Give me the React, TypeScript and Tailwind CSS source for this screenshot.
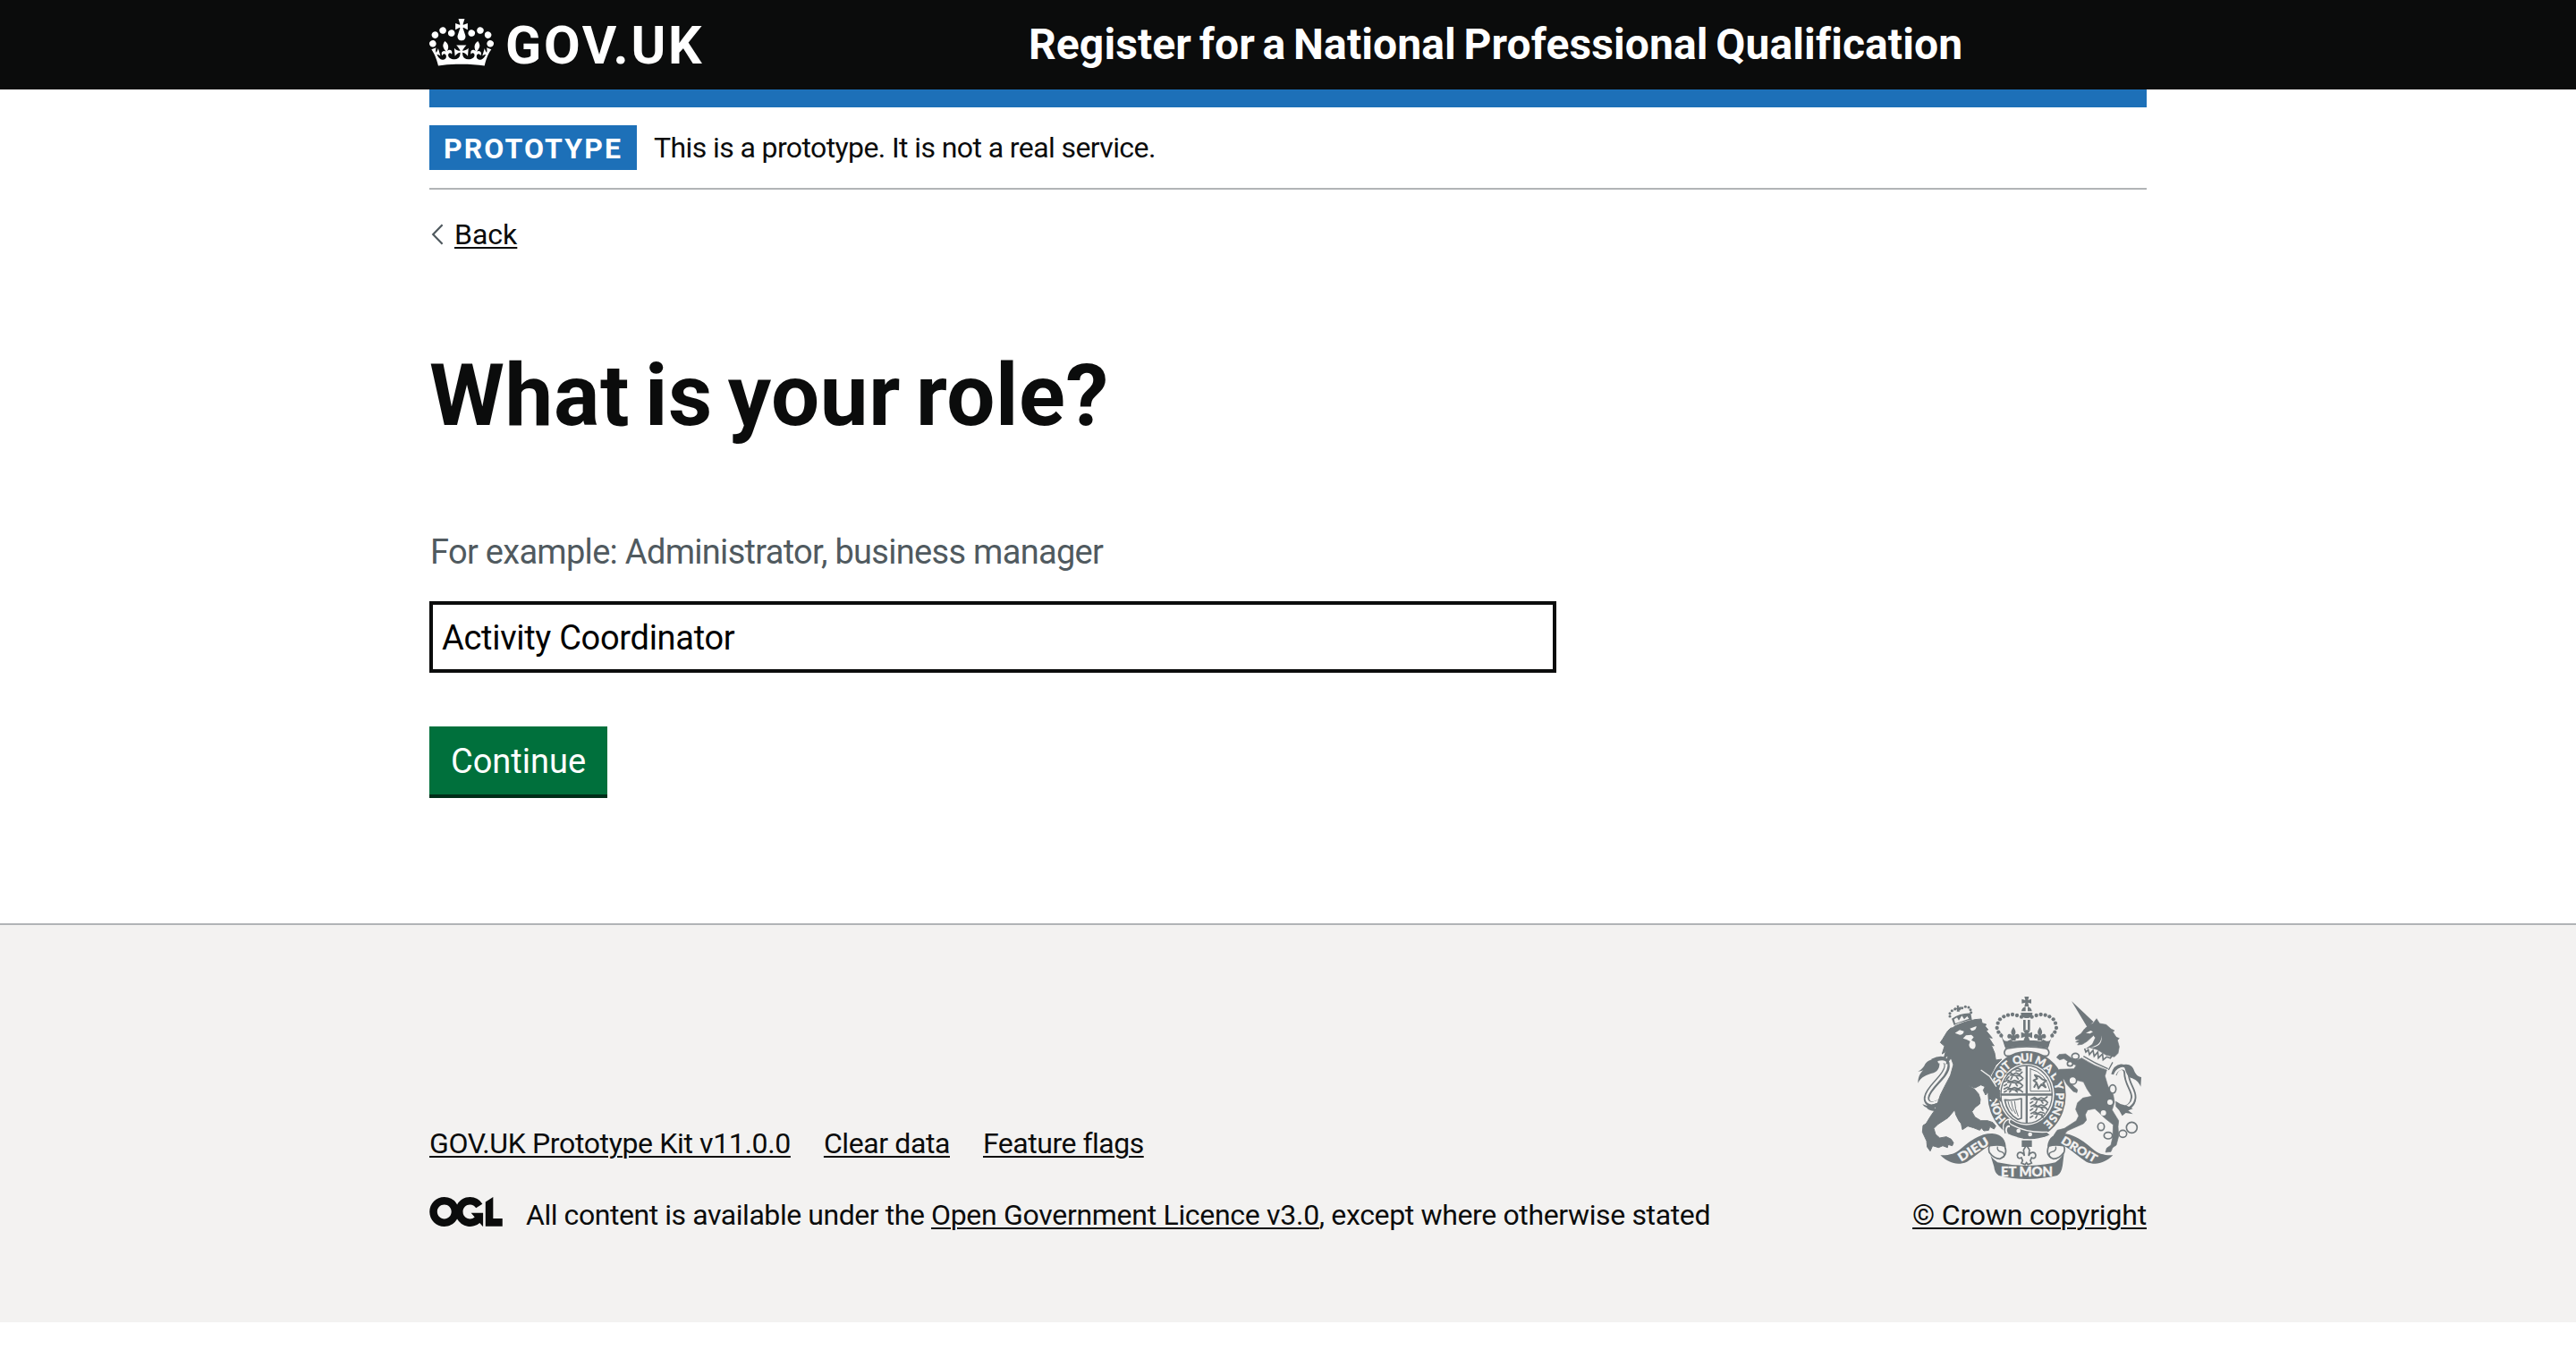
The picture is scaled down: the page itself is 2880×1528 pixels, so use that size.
import { useState } from "react";

const ink = "#6f777b";
const paper = "#f3f2f1";

function CrownLogo() {
  return (
    <svg viewBox="0 0 132 97" className="h-[53px] w-[72px] shrink-0" fill="currentColor" aria-hidden="true">
      <path
        fillRule="evenodd"
        d="M25 30.2c3.5 1.5 7.7-.2 9.1-3.7 1.5-3.6-.2-7.8-3.9-9.2-3.6-1.4-7.6.3-9.1 3.9-1.4 3.5.3 7.5 3.9 9zM9 39.5c3.6 1.5 7.8-.2 9.2-3.7 1.5-3.6-.2-7.8-3.9-9.1-3.6-1.5-7.6.2-9.1 3.8-1.4 3.5.3 7.5 3.8 9zM4.4 57.2c3.5 1.5 7.7-.2 9.1-3.8 1.5-3.6-.2-7.7-3.9-9.1-3.5-1.5-7.6.3-9.1 3.8-1.4 3.5.3 7.6 3.9 9.1zm38.3-21.4c3.5 1.5 7.7-.2 9.1-3.8 1.5-3.6-.2-7.7-3.9-9.1-3.6-1.5-7.6.3-9.1 3.8-1.3 3.6.4 7.7 3.9 9.1zm64.4-5.6c-3.6 1.5-7.8-.2-9.1-3.7-1.5-3.6.2-7.8 3.8-9.2 3.6-1.4 7.7.3 9.2 3.9 1.3 3.5-.4 7.5-3.9 9zm15.9 9.3c-3.6 1.5-7.7-.2-9.1-3.7-1.5-3.6.2-7.8 3.7-9.1 3.6-1.5 7.7.2 9.2 3.8 1.5 3.5-.3 7.5-3.8 9zm4.7 17.7c-3.6 1.5-7.8-.2-9.2-3.8-1.5-3.6.2-7.7 3.9-9.1 3.6-1.5 7.7.3 9.2 3.8 1.3 3.5-.4 7.6-3.9 9.1zM89.3 35.8c-3.6 1.5-7.8-.2-9.2-3.8-1.4-3.6.2-7.7 3.9-9.1 3.6-1.5 7.7.3 9.2 3.8 1.4 3.6-.3 7.7-3.9 9.1zM69.7 17.7l8.9 4.7V9.3l-8.9 2.8c-.2-.3-.5-.6-.9-.9L72.4 0H59.6l3.5 11.2c-.3.3-.6.5-.9.9l-8.8-2.8v13.1l8.8-4.7c.3.3.6.7.9.9l-5 15.4v.1c-.2.8-.4 1.6-.4 2.4 0 4.1 3.1 7.5 7 8.1h.2c.3 0 .7.1 1 .1.4 0 .7 0 1-.1h.2c4-.6 7.1-4.1 7.1-8.1 0-.8-.1-1.7-.4-2.4V34l-5.1-15.4c.4-.2.7-.6 1-.9zM66 92.8c16.9 0 32.8 1.1 47.1 3.2 4-16.9 8.9-26.7 14-33.5l-9.6-3.4c1 4.9 1.1 7.2 0 10.2-1.5-1.4-3-4.3-4.2-8.7L108.6 76c2.8-2 5-3.2 7.5-3.3-4.4 9.4-10 11.9-13.6 11.2-4.3-.8-6.3-4.6-5.6-7.9 1-4.7 5.7-5.9 8-.5 4.3-8.7-3-11.4-7.6-8.8 7.1-7.2 7.9-13.5 2.1-21.1-8 6.1-8.1 12.3-4.5 20.8-4.7-5.4-12.1-2.5-9.5 6.2 3.4-5.2 7.9-2 7.2 3.1-.6 4.3-6.4 7.8-13.5 7.2-10.3-.9-10.9-8-11.2-13.8 2.5-.5 7.1 1.8 11 7.3L80.2 60c-4.1 4.4-8 5.3-12.3 5.4 1.4-4.4 8-11.6 8-11.6H55.5s6.4 7.2 7.9 11.6c-4.2-.1-8-1-12.3-5.4l1.4 16.4c3.9-5.5 8.5-7.7 10.9-7.3-.3 5.8-.9 12.8-11.1 13.8-7.2.6-12.9-2.9-13.5-7.2-.7-5 3.8-8.3 7.1-3.1 2.7-8.7-4.6-11.6-9.4-6.2 3.7-8.5 3.6-14.7-4.6-20.8-5.8 7.6-5 13.9 2.2 21.1-4.7-2.6-11.9.1-7.7 8.8 2.3-5.5 7.1-4.2 8.1.5.7 3.3-1.3 7.1-5.7 7.9-3.5.7-9-1.8-13.5-11.2 2.5.1 4.7 1.3 7.5 3.3l-4.7-15.4c-1.2 4.4-2.7 7.2-4.3 8.7-1.1-3-.9-5.3 0-10.2l-9.5 3.4c5 6.9 9.9 16.7 14 33.5 14.8-2.1 30.8-3.2 47.7-3.2z"
      />
    </svg>
  );
}

function OglLogo() {
  return (
    <svg viewBox="0 0 483.2 195.7" className="h-[33px] w-[82px] shrink-0" fill="currentColor" aria-hidden="true">
      <path d="M421.5 142.8V.1l-50.7 32.3v161.1h112.4v-50.7zm-122.3-9.6A47.12 47.12 0 0 1 221 97.8c0-26 21.1-47.1 47.1-47.1 16.7 0 31.4 8.7 39.7 21.8l42.7-27.2A97.63 97.63 0 0 0 268.1 0c-36.5 0-68.3 20.1-85.1 49.7A98 98 0 0 0 97.8 0C43.9 0 0 43.9 0 97.8s43.9 97.8 97.8 97.8c36.5 0 68.3-20.1 85.1-49.7a97.76 97.76 0 0 0 149.6 25.4l19.4 22.2h3v-87.8h-80l24.3 27.5zM97.8 145c-26 0-47.1-21.1-47.1-47.1s21.1-47.1 47.1-47.1 47.1 21.1 47.1 47.1S123.8 145 97.8 145" />
    </svg>
  );
}

const crownBeads = [
  [420, 110], [405, 105], [390, 102], [375, 104], [361, 109], [348, 118], [341, 131], [338, 147], [343, 161], [352, 173],
];

const lionCrownBeads = [
  [180, 108], [180, 98], [187, 89], [197, 84], [212, 84], [221, 80], [232, 76], [243, 78], [249, 86], [251, 95],
];

const garterLetters: [string, number, number, number][] = [
  ["H", 350, 451, -132], ["O", 338, 423, -115], ["N", 330, 396, -104],
  ["S", 338, 326, -64], ["O", 348, 303, -54], ["I", 359, 287, -46], ["T", 370, 273, -38],
  ["Q", 405, 254, -16], ["U", 431, 246, -4], ["I", 452, 247, 6],
  ["M", 484, 259, 24], ["A", 511, 282, 40], ["L", 532, 308, 54],
  ["Y", 545, 341, 74],
  ["P", 549, 376, 92], ["E", 546, 400, 102], ["N", 539, 425, 112], ["S", 526, 450, 124], ["E", 510, 469, 134],
];

const unicornLinks: [number, number, number, number][] = [
  [601, 242, 12, 10], [583, 267, 9, 8], [592, 323, 13, 13], [726, 352, 11, 14], [687, 478, 11, 13], [711, 508, 14, 11], [760, 502, 13, 12], [790, 481, 18, 18],
];

function Fleur({ x, y }: { x: number; y: number }) {
  return (
    <g transform={`translate(${x} ${y})`}>
      <path d="M0-22C7-12 10-4 5 3L3 8C8 1 17-2 20 7c2 8-6 12-11 8l-2 8H-7l-2-8c-5 4-13 0-11-8C-17-2-8 1-3 8L-5 3C-10-4-7-12 0-22z" />
    </g>
  );
}

function RibbonEnd() {
  return (
    <>
      <path d="M148 574C178 575 198 569 216 553C250 522 285 500 322 501C350 503 366 518 368 545L350 541C338 540 325 541 312 543C290 553 262 581 237 596C206 609 178 602 148 574z" />
      <path d="M314 542q30-6 50 2 12 30-16 42-20 0-36-22-4-16 2-22z" fill={paper} stroke={ink} strokeWidth="5" />
      <path d="M340 545q-4 14 14 18 12 4 6 18" fill="none" stroke={ink} strokeWidth="4" />
    </>
  );
}

function RoyalArms() {
  return (
    <svg viewBox="54 30 786 636" className="h-[212px] w-[262px]" fill={ink} aria-hidden="true">
      {/* central crown */}
      <path d="M430 42h15l-3 12 11-4v15l-11-3 3 13h-15l3-13-12 3V50l12 4z" />
      <path d="M420 91c1-9 7-14 14-15v15zM455 91c-1-9-7-14-14-15v15zM418 96h39c0 12-8 18-19 18s-20-6-20-18z" />
      {crownBeads.map(([x, y]) => (
        <g key={`${x}-${y}`}>
          <circle cx={x} cy={y} r="6.4" />
          <circle cx={875 - x} cy={y} r="6.4" />
        </g>
      ))}
      <path d="M426 120h8v34h-8zM441 120h8v34h-8z" />
      <path d="M425 154h25l-7 12 13-5v20l-13-5 5 14h-21l5-14-13 5v-20l13 5z" />
      <Fleur x={393} y={166} />
      <Fleur x={482} y={166} />
      <path d="M348 160l16 50q73-16 147 0l16-50-9 10 4 9c-4 10-12 14-19 12l-10-5-13 9-20-6-22 6-22-6-20 6-13-9-10 5c-8 2-14-3-17-12l2-9z" />
      <path d="M362 196q75-16 151 0l-4 20q-72-16-143 0z" />
      <path d="M374 216q64-13 127 0c14 3 14 20 5 25H369c-9-5-9-22 5-25z" fill={paper} stroke={ink} strokeWidth="5" />

      {/* garter and shield */}
      <ellipse cx="438" cy="372" rx="131" ry="148" />
      <ellipse cx="437" cy="370" rx="93" ry="103" fill={paper} />
      <ellipse cx="437" cy="370" rx="86" ry="97" fill="none" stroke={ink} strokeWidth="4" />
      <path d="M434 274h7v194h-7zM350 367h174v7H350z" />
      <g fill="none" stroke={ink} strokeWidth="5" strokeLinecap="round" strokeLinejoin="round">
        <path d="M372 303l10-7 9 7 11-5 12 5 8-8M378 311l-8 8M389 311l-5 9M402 309l7 9M417 308l8 8M382 305l35 3" />
        <path d="M362 328l12-6 10 6 12-5 14 4 12-7M370 336l-8 5M384 335l-4 8M400 333l6 8M416 333l8 7M374 329l42 3" />
        <path d="M362 352l12-6 10 6 12-5 14 4 12-7M370 358l-8 4M384 358l-4 4M400 357l6 5M416 356l8 6M374 353l42 2" />
        <path d="M395 287l12-5 12 5M402 291l14 0" />
        <path d="M452 386l12-6 10 6 12-5 10 4 10-7M458 394l-8 5M472 393l-4 8M486 391l6 8M500 390l8 7M462 387l36 3" />
        <path d="M452 410l12-6 10 6 12-5 10 4 10-7M458 418l-8 5M472 417l-4 8M486 415l6 8M500 414l8 7M462 411l36 3" />
        <path d="M452 434l12-6 10 6 10-5 12 4M458 442l-8 5M472 441l-4 8M486 439l6 8M462 435l28 3" />
        <path d="M463 345l8-14-10-8 12-6-8-12 14 5 12 10 12 4-10 8 8 14-14-10-10 14-4-14" strokeWidth="6" />
        <path d="M450 284v75h66" strokeWidth="3" />
        <path d="M450 284q52 12 66 75" strokeWidth="3" />
        <path d="M364 388q25 4 56-4v66l-12 4q-36-20-44-66z" strokeWidth="5" />
        <path d="M375 394q2 18 14 32M386 394q2 22 14 40M397 393q1 26 12 50" strokeWidth="3" />
      </g>
      <g fill={paper} stroke={paper} strokeWidth="1" fontFamily="Lato, sans-serif" fontWeight="900" fontSize="37" textAnchor="middle">
        {garterLetters.map(([c, x, y, r], i) => (
          <text key={i} transform={`translate(${x} ${y}) rotate(${r})`} y="13">
            {c}
          </text>
        ))}
      </g>
      <path d="M360 470q8-18 22-16-8 12 6 18 52 28 118 24l12 10q-40 20-92 14-34-6-60-20-10-14-6-30z" stroke={paper} strokeWidth="4" />
      <path d="M366 500q-6-16 4-26 10-6 14 2-2 8-8 6-6 10 2 18" fill={paper} stroke={ink} strokeWidth="4" />
      <circle cx="410" cy="492" r="7" fill={paper} />
      <circle cx="449" cy="504" r="7" fill={paper} />

      {/* lion */}
      <path d="M73 332c10-20 28-28 52-34 18-6 24-26 18-46-24-4-42 6-48 20-4 8-14 18-22 20 8 2 14-2 18-4-10 10-18 22-18 44z" />
      <path d="M122 260c28-14 50-10 48 16-2 34-62 68-68 104-2 16 10 26 26 22 12-2 22-8 32-14" fill="none" stroke={ink} strokeWidth="19" />
      <path d="M140 262c20-6 30 0 28 14-2 34-62 68-66 104-2 14 10 22 24 18 16-4 24-10 36-18" fill="none" stroke={paper} strokeWidth="8" />
      <path d="M88 402c10 6 18 6 28 4l44-14-14 20-18 2 8 12c-16 0-30-4-34-12-8-2-12-8-14-12z" />
      <path
        stroke={ink}
        strokeWidth="3"
        strokeLinejoin="round"
        d="M172 158l10-10 8-2 8-6q34-16 66-21l21-2 3 14 14 4-4 6 10 12-6 4 20 24-12-2 18 28-9-2 11 26 4 24 20-3-20 20-12 24-6 10 16 34 16 18-2 14 6 22-18-14-8 16-12-14 4-10-12-8-6 8-8-16 6-12-14-6-20 10-24-8 22 12 14 16 6 18-2 16-16 12-10 14 10 18 20 12 22 0 18 6 10 12-6 10-14-8-4 12-16 2-8-10-6 8-20-8-20-6-18 12-4-20-8-10-10-20-4-18 6-28-6 30-22 26-34 22-14 14 6 20 14 12 22-4 16 8 8 12-4 10-14-4-2 10-16-6-14 6-20-6-8 18-10-14-2-20-14-30 2-22 10-6 16-26 14-20 10-26 8-24 14-28 20-38 10-36-8-22-16 20 6-28-14 8 6-22-12 8 8-26-14-12 8-12z"
      />
      <path d="M197 164l16-10 14 4q-2 12-14 12zM247 149l22-8q0 14-16 16zM224 182l10-10 18-2 8 8-8 10 12 6q6 20-6 24-12 0-14-14l4-12-12-6z" fill={paper} />
      <path d="M284 288l30 22 22 34" stroke={paper} strokeWidth="4" fill="none" />
      <path d="M194 138l-8-22q30-20 64-18l4 22q-32 4-60 18z" />
      <path d="M194 118l10-6 6 10 10-16 8 12 10-10 6 8-46 16z" fill={paper} />
      {lionCrownBeads.map(([x, y]) => (
        <circle key={`${x}-${y}`} cx={x} cy={y} r="4.6" />
      ))}
      <path d="M203 71l8 1-2 6 8-2 1 9-8-1 3 8h-10l1-7-7 2-1-8 8 1z" />

      {/* unicorn */}
      <path d="M588 57l74 70-22 16z" />
      <path
        stroke={ink}
        strokeWidth="2"
        strokeLinejoin="round"
        d="M602 178l18-12 12-16 18-16 10-2 12-16 10 16 22 4 16 14 12 6-6 4 12 18 10 4-6 6 6 22-4 22-12 12-28-6-30-18-26-8-10 4 20-14 10-22-6-8-22 20-16 10-16 2 6-8-12-2 14-8-14 0z"
      />
      <path d="M636 164l16-8 8 4-10 6zM688 172c2 24-14 36-36 40 20 2 42-10 36-40z" fill={paper} />
      <path d="M632 216l94 48-14 26q-40-18-88-44z" fill={paper} />
      <path d="M632 216l4 12 8-8 4 16 12-14 4 20 12-14 2 20 14-14 2 20 12-10 12 4 8-10" fill="none" stroke={ink} strokeWidth="5" />
      <path d="M628 242q38 24 82 42M726 262l-14 26" fill="none" stroke={ink} strokeWidth="4" />
      <path
        stroke={ink}
        strokeWidth="2"
        strokeLinejoin="round"
        d="M622 248q44 28 84 40l-6 20 10 34 18 30 4 24-8 26 22 36-2 20 2 32-8 30-12 8-6 14-18 2 4-14 14-10 6-26 2-42-28-22-18-18-16-14-24 4-8 16 4 18-10 12-54 24-18 22-20-2-8-4 12-18 24-6 40-26 8-16-10-22 6-22 18-16 30-6-16-24-12-24-24-6-24 2 14 18 14 12-2 10-12-4-22-24-10-18-18-2-8-20 12-10 48-2 8-12-18-6-24-16-14 4-10-8 8-10 22-2 22 16 18 4z"
      />
      <path d="M744 300c10-34 40-32 42-8 0 38 26 60 24 84-2 26-22 38-42 40" transform="translate(-14 4)" fill="none" stroke={ink} strokeWidth="19" />
      <path d="M744 310c8-36 40-40 42-18 0 38 26 60 24 84-2 22-20 34-46 40" transform="translate(-14 4)" fill="none" stroke={paper} strokeWidth="8" />
      <path d="M764 270c18-4 30 6 34 20 6 14 14 20 24 22l-2 32c-6-16-18-26-34-30-14-8-18-24-22-44z" />
      <path d="M736 392l16 10 22 6 20 10-16 6 16 12-24-4-12 10-10-18-12-14z" />
      {unicornLinks.map(([x, y, rx, ry]) => (
        <ellipse key={`${x}-${y}`} cx={x} cy={y} rx={rx} ry={ry} fill={paper} stroke={ink} strokeWidth="5" />
      ))}
      <circle cx="717" cy="396" r="9" fill={paper} />
      <circle cx="695" cy="432" r="9" fill={paper} />

      {/* motto ribbon */}
      <path d="M421 524h34v22h-34z" />
      <path
        d="M437 540l10 16-3 20c4-14 22-16 24-2 0 10-8 12-14 8l-4 10 4 8-12 5-5-6-5 6-12-5 4-8-4-10c-6 4-14 2-14-8 2-14 20-12 24 2l-3-20z"
        fill={paper}
        stroke={ink}
        strokeWidth="5"
      />
      <RibbonEnd />
      <g transform="translate(875 0) scale(-1 1)">
        <RibbonEnd />
      </g>
      <path d="M312 560q2 20 28 38 96 22 194 0 24-16 30-40l-6 50q-4 26-18 34-104 24-196 0-14-8-16-30z" />
      <g fill={paper} stroke={paper} strokeWidth="1" fontFamily="Lato, sans-serif" fontWeight="900" textAnchor="middle">
        <text fontSize="40" transform="translate(266 566) rotate(-32)" textLength="114" lengthAdjust="spacingAndGlyphs">DIEU</text>
        <text fontSize="38" transform="translate(607 566) rotate(31)" textLength="132" lengthAdjust="spacingAndGlyphs">DROIT</text>
        <text fontSize="45" x="438" y="644" textLength="174" lengthAdjust="spacingAndGlyphs">ET MON</text>
      </g>
    </svg>
  );
}

const link = "underline decoration-2 underline-offset-[3px]";

export default function App() {
  const [role, setRole] = useState("Activity Coordinator");
  return (
    <div className="min-h-[1528px] w-full bg-white font-[Roboto,sans-serif] text-[32px] leading-[40px] text-[#0b0c0c]">
      <header className="h-[100px] bg-[#0b0c0c] text-white">
        <div className="mx-auto flex h-full w-[1920px]">
          <a href="#" className="flex w-[670px] items-start pt-[21px]">
            <CrownLogo />
            <span className="ml-[13px] text-[59px] leading-[60px] font-bold tracking-[2.7px]">GOV.UK</span>
          </a>
          <a href="#" className="pt-[20px] text-[48px] leading-[60px] font-bold tracking-[0.1px] [word-spacing:-3.3px] whitespace-nowrap">
            Register for a National Professional Qualification
          </a>
        </div>
      </header>

      <div className="mx-auto h-[932px] w-[1920px]">
        <div className="h-5 bg-[#1d70b8]" />
        <div className="flex h-[92px] items-center border-b-2 border-[#b1b4b6]">
          <strong className="flex h-[50px] w-[232px] items-center justify-center bg-[#1d70b8] pt-[2px] font-bold tracking-[2.1px] text-white">
            PROTOTYPE
          </strong>
          <span className="ml-[19px] tracking-[-0.6px]">This is a prototype. It is not a real service.</span>
        </div>

        <a href="#" className="mt-[30px] flex items-center">
          <svg viewBox="0 0 14 24" className="ml-[2px] h-6 w-[14px]" fill="none" stroke="#505a5f" strokeWidth="2.2">
            <path d="M12.6 1.2 2.2 12l10.4 10.8" />
          </svg>
          <span className={`ml-[12px] ${link}`}>Back</span>
        </a>

        <main className="mt-[110px] w-[1260px]">
          <h1 className="text-[96px] leading-[100px] font-bold tracking-[0.6px] [word-spacing:-7.5px]">What is your role?</h1>
          <p className="mt-[100px] pl-px text-[38px] leading-[50px] tracking-[-0.7px] text-[#505a5f]">
            For example: Administrator, business manager
          </p>
          <input
            value={role}
            onChange={(e) => setRole(e.target.value)}
            className="mt-[30px] block h-[80px] w-full border-4 border-[#0b0c0c] px-[10px] pt-[2px] text-[38px] tracking-[-0.3px] text-black outline-none"
          />
          <button className="mt-[60px] block h-[80px] w-[199px] border-b-4 border-[#002d18] bg-[#00703c] pt-[2px] text-[38px] leading-[50px] text-white">
            Continue
          </button>
        </main>
      </div>

      <footer className="h-[446px] border-t-2 border-[#b1b4b6] bg-[#f3f2f1]">
        <div className="mx-auto flex h-[344px] w-[1920px] items-end justify-between">
          <div>
            <div className="flex gap-[37px]">
              <a href="#" className={`tracking-[-0.36px] ${link}`}>GOV.UK Prototype Kit v11.0.0</a>
              <a href="#" className={`tracking-[-0.4px] ${link}`}>Clear data</a>
              <a href="#" className={`tracking-[-0.49px] ${link}`}>Feature flags</a>
            </div>
            <div className="mt-10 flex">
              <OglLogo />
              <span className="ml-[26px] tracking-[-0.44px] whitespace-pre">
                All content is available under the{" "}
                <a href="#" className={`tracking-[-0.3px] ${link}`}>Open Government Licence v3.0</a>
                <span className="tracking-[-0.36px]">, except where otherwise stated</span>
              </span>
            </div>
          </div>
          <div className="flex flex-col items-end">
            <RoyalArms />
            <a href="#" className={`mt-4 tracking-[-0.18px] ${link}`}>© Crown copyright</a>
          </div>
        </div>
      </footer>
    </div>
  );
}
